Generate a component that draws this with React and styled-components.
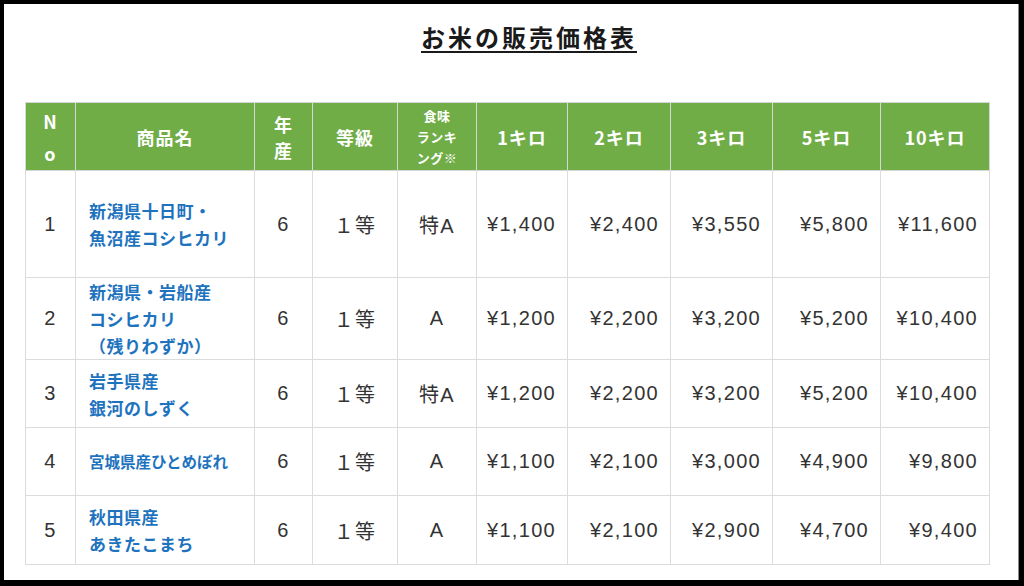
import React from 'react';
import styled, { createGlobalStyle } from 'styled-components';

const Global = createGlobalStyle`
  html, body { margin: 0; padding: 0; background: #000; }
  body { font-family: "Liberation Sans", "Noto Sans CJK JP", sans-serif; }
`;

const Frame = styled.div`
  box-sizing: border-box;
  width: 1024px;
  height: 586px;
  padding: 4px 5px 6px 4px;
  background: #000;
`;

const Sheet = styled.main`
  box-sizing: border-box;
  height: 100%;
  background: #fff;
  border-right: 1px solid #8a8a8a;
  padding: 16px 29px 0 21px;
  display: flex;
  flex-direction: column;
`;

const Title = styled.h1`
  margin: 0 0 0 44px;
  align-self: center;
  font-family: "Noto Sans CJK JP", sans-serif;
  font-size: 24px;
  line-height: 34px;
  font-weight: 700;
  letter-spacing: 3px;
  color: #1a1a1a;
  text-decoration: underline;
  text-decoration-thickness: 2px;
  text-underline-offset: 4px;
`;

const Table = styled.table`
  margin-top: 48px;
  width: 964px;
  border-collapse: collapse;
  table-layout: fixed;
`;

const Row = styled.tr`
  height: ${p => p.$h}px;
`;

const HeadCell = styled.th`
  background: #70ad47;
  color: #fff;
  font-family: "Noto Sans CJK JP", sans-serif;
  font-weight: 700;
  font-size: ${p => (p.$small ? '13px' : '18px')};
  line-height: ${p => (p.$small ? '21px' : p.$tall ? '32px' : '26px')};
  letter-spacing: ${p => (p.$small ? '0.5px' : '1px')};
  border: 1px solid #d6d6d6;
  padding: 0;
  text-align: center;
  vertical-align: middle;
`;

const Cell = styled.td`
  border: 1px solid #dcdcdc;
  padding: 0 ${p => (p.$align === 'right' ? '11px' : '0')} 0 ${p => (p.$align === 'left' ? '13px' : '0')};
  font-size: 20px;
  letter-spacing: 1.3px;
  color: #333;
  text-align: ${p => p.$align || 'center'};
  vertical-align: middle;
  white-space: nowrap;
`;

const NameLink = styled.a`
  display: block;
  color: #1e73be;
  font-family: "Noto Sans CJK JP", sans-serif;
  font-weight: 700;
  font-size: ${p => p.$size || 17}px;
  line-height: 27px;
  letter-spacing: ${p => (p.$size ? '0' : '0.5px')};
  text-decoration: none;
`;

const cols = [50, 179, 58, 85, 79, 91, 103, 102, 108, 109];

const rows = [
  { no: '1', name: ['新潟県十日町・', '魚沼産コシヒカリ'], rank: '特A', prices: ['¥1,400', '¥2,400', '¥3,550', '¥5,800', '¥11,600'], h: 107 },
  { no: '2', name: ['新潟県・岩船産', 'コシヒカリ', '（残りわずか）'], rank: 'A', prices: ['¥1,200', '¥2,200', '¥3,200', '¥5,200', '¥10,400'], h: 82 },
  { no: '3', name: ['岩手県産', '銀河のしずく'], rank: '特A', prices: ['¥1,200', '¥2,200', '¥3,200', '¥5,200', '¥10,400'], h: 68 },
  { no: '4', name: ['宮城県産ひとめぼれ'], size: 15.5, rank: 'A', prices: ['¥1,100', '¥2,100', '¥3,000', '¥4,900', '¥9,800'], h: 68 },
  { no: '5', name: ['秋田県産', 'あきたこまち'], rank: 'A', prices: ['¥1,100', '¥2,100', '¥2,900', '¥4,700', '¥9,400'], h: 69 },
];

const lines = arr => arr.map((t, i) => (
  <React.Fragment key={i}>{i > 0 && <br />}{t}</React.Fragment>
));

export default function App() {
  return (
    <Frame>
      <Global />
      <Sheet>
        <Title>お米の販売価格表</Title>
        <Table>
          <colgroup>
            {cols.map((w, i) => <col key={i} style={{ width: w }} />)}
          </colgroup>
          <thead>
            <Row $h={68}>
              <HeadCell $tall>{lines(['N', 'o'])}</HeadCell>
              <HeadCell>商品名</HeadCell>
              <HeadCell>{lines(['年', '産'])}</HeadCell>
              <HeadCell>等級</HeadCell>
              <HeadCell $small>{lines(['食味', 'ランキ', 'ング※'])}</HeadCell>
              <HeadCell>1キロ</HeadCell>
              <HeadCell>2キロ</HeadCell>
              <HeadCell>3キロ</HeadCell>
              <HeadCell>5キロ</HeadCell>
              <HeadCell>10キロ</HeadCell>
            </Row>
          </thead>
          <tbody>
            {rows.map(r => (
              <Row key={r.no} $h={r.h}>
                <Cell>{r.no}</Cell>
                <Cell $align="left">
                  <NameLink href="#" $size={r.size}>{lines(r.name)}</NameLink>
                </Cell>
                <Cell>6</Cell>
                <Cell>１等</Cell>
                <Cell>{r.rank}</Cell>
                {r.prices.map((p, i) => <Cell key={i} $align="right">{p}</Cell>)}
              </Row>
            ))}
          </tbody>
        </Table>
      </Sheet>
    </Frame>
  );
}
